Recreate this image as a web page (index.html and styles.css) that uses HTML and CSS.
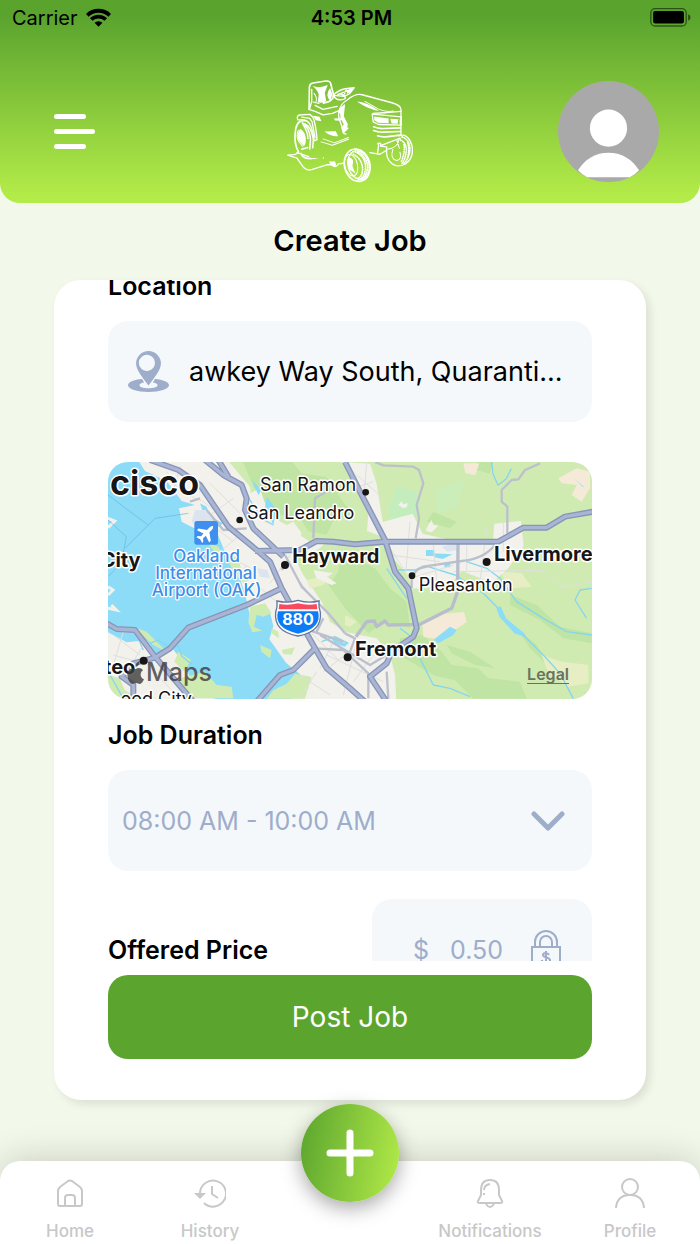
FILE: index.html
```html
<!DOCTYPE html>
<html lang="en">
<head>
<meta charset="utf-8">
<meta name="viewport" content="width=device-width, initial-scale=1">
<title>Create Job</title>
<link rel="stylesheet" href="styles.css">
</head>
<body>
<div class="app">
  <header class="header">
    <div class="status">
      <span class="carrier">Carrier
        <svg class="wifi" viewBox="0 0 76 56" aria-hidden="true"><path d="M38 56 26 44a17 17 0 0 1 24 0zM12 30a37 37 0 0 1 52 0l-8 8a26 26 0 0 0-36 0zM0 17a54 54 0 0 1 76 0l-8 9a43 43 0 0 0-60 0z"/></svg>
      </span>
      <time class="clock">4:53 PM</time>
      <svg class="battery" viewBox="0 0 124 58" aria-hidden="true"><rect x="2" y="2" width="108" height="53" rx="13" fill="none" stroke="#000" stroke-opacity=".5" stroke-width="4"/><rect x="9" y="9" width="94" height="38" rx="6"/><path d="M116 19q7 3 7 10t-7 10z" opacity=".55"/></svg>
    </div>
    <div class="bar">
      <button class="menu" type="button" aria-label="Menu"><span class="line short"></span><span class="line"></span><span class="line short"></span></button>
      <svg class="logo" viewBox="22 32 377 308" fill="none" stroke="#fff" stroke-width="5" stroke-linejoin="round" stroke-linecap="round" role="img" aria-label="Lawn mower">
        <path d="M88 120 89 53Q90 43 100 41l38-6q14-1 15 9l8 31-2 12-10 9-18 5"/>
        <path d="M96 60v36l-7 24M88 120l18 6 24 10 28-4 18-8M106 108l24 12 42-9" stroke-width="4"/>
        <path d="M98 50q22 8 46-3l-9 23 4 24-8 6-17-1 3-24q-5-15-19-25z" fill="#fff" stroke="none"/>
        <path d="M151 56q-16 20 0 38l7-18z" fill="#fff" stroke="none"/>
        <path d="M103 72q10 12 6 24M100 98l18 4" stroke-width="3"/>
        <path d="M161 76q18-15 35-18l27-3-14 18-16 8-32-3q7 14 20 13 14 0 16-6-3-10-18-12M174 76l38-15M199 62l-5 12" stroke-width="4"/>
        <path d="M202 63l19-7-12 15-8 3z" fill="#fff" stroke="none"/>
        <path d="M181 130q-5-24 22-39 24-20 44-15l89 24q26 7 27 20v78M180 116q-8 25 1 40l7 20 16 0-14 14 8 4" stroke-width="4"/>
        <path d="M180 116l16-12-4 36 12 24-3 17-13 8-4-16 8-8-10-18z" fill="#fff" stroke="none"/>
        <path d="M231 96q30 1 66 28-10 1-24-6-16-5-42-22z" fill="#fff" stroke="none"/>
        <path d="M255 96l41 23q24 10 44 6" stroke-width="3"/>
        <path d="M277 134l87 8v25l-68-2-16-8zM363 126l-50 4-34 2" stroke-width="4"/>
        <path d="M283 141l43 6v14l-31-1-12-8zM331 148l24 1-2 14-18-1zM359 149l5 1v13h-5z" fill="#fff" stroke="none"/>
        <path d="M281 172q15 6 30 5l50-2M281 183q15 6 30 5l50-2M293 199q10 4 25 3l42-5"/>
        <path d="M54 151q-6-15 13-15l24-1 9 8q8 20 12 67l-9 4q-4-36-14-52-8-12-27-11z" stroke-width="4"/>
        <path d="M66 143l24 4 7 10 9 48" stroke-width="4"/>
        <path d="M78 154q-24-5-30 24-7 42 8 68"/>
        <path d="M75 163q20 9 26 48l-2 24M68 160q24 18 24 54l-2 24M84 234l-18 5M70 166q14 18 15 44" stroke-width="5" stroke-dasharray="2 4"/>
        <path d="M62 178q20 13 16 42l-5 10-13-13q-14-19 2-39z" fill="#fff" stroke="none"/>
        <path d="M56 182q-8 16 1 34l12 15" stroke-width="3"/>
        <path d="M100 139l19 3 6 13-17-3zM134 186l34-1 7 15q-19 3-41-14zM162 147l26-1-6 8-16-1z" fill="#fff" stroke="none"/>
        <path d="M124 217l34 10 48-18M130 208l34 12 42-16" stroke-width="3"/>
        <path d="M56 247q-3 8-15 8l-17 2 28 9 20 28q12 12 31 4l40-13 13 1q11 12 20-3l16-2M52 249l35 12" stroke-width="4"/>
        <path d="M63 246q5 15 21 18l34 3-28 3q-30-1-27-24zM148 276h18l4 14q-18 4-22-14z" fill="#fff" stroke="none"/>
        <circle cx="131" cy="265" r="2" fill="#fff" stroke="none"/>
        <ellipse cx="232" cy="287" rx="38" ry="49" transform="rotate(-15 232 287)" stroke-dasharray="5 2"/>
        <ellipse cx="236" cy="286" rx="31" ry="43" transform="rotate(-15 236 286)" stroke-width="5" stroke-dasharray="2 5"/>
        <path d="M226 247q32 14 31 48-2 30-24 38M236 246q28 22 27 48-2 25-18 38M220 254q28 14 28 46 0 20-16 28" stroke-width="5" stroke-dasharray="2 5"/>
        <ellipse cx="214" cy="287" rx="19" ry="33" transform="rotate(-13 214 287)" stroke-width="3"/>
        <path d="M206 262q20 5 12 25l1 7 8 18-18-12-8-22z" fill="#fff" stroke="none"/>
        <path d="M270 249l30 5 20-12 0-10-18-2 0-8-8-1 2 8-3 21M302 228l59-22" stroke-width="4"/>
        <path d="M356 199q26-10 39 26 9 37-17 57-30 17-50-8-10-14-8-31" stroke-width="4"/>
        <path d="M366 202q23 8 24 37-3 30-19 43M361 211q18 8 18 32-2 26-15 41M372 225q4 22-8 51M383 220q8 24-3 52" stroke-width="5" stroke-dasharray="2 5"/>
        <path d="M357 209q-2 26-36 30M339 240q-10 27 11 33 17-4 10-25M350 210l8 26" stroke-width="3"/>
      </svg>
      <button class="avatar" type="button" aria-label="Account">
        <svg viewBox="0 0 304 304" aria-hidden="true"><circle cx="152" cy="152" r="152" fill="#a9a9a9"/><circle cx="152" cy="142" r="56" fill="#fff"/><path d="M60 269q34-53 92-53t92 53q-14 15-28 21H88q-14-6-28-21z" fill="#fff"/></svg>
      </button>
    </div>
  </header>

  <h1 class="title">Create Job</h1>

  <form class="card">
    <div class="scroller">
      <div class="fields">
        <label class="label" for="location">Location</label>
        <div class="field location">
          <svg class="pin" viewBox="0 0 122 122" fill="#9eadca" aria-hidden="true"><path fill-rule="evenodd" d="M61 0a37 37 0 0 1 37 37c0 20-21 43-37 66C45 80 24 57 24 37A37 37 0 0 1 61 0zm0 12a24 24 0 1 0 0 47 24 24 0 0 0 0-47z"/><path fill-rule="evenodd" d="M42 83C17 85 0 92 0 102c0 11 27 20 61 20s61-9 61-20c0-10-17-17-42-19l-6 11c8 1 14 4 14 8 0 5-12 9-27 9s-27-4-27-9c0-4 6-7 14-8z"/></svg>
          <input class="input" id="location" type="text" value="awkey Way South, Quaranti...">
        </div>

        <div class="map">
          <svg class="map-art" viewBox="24 21 1452 711" preserveAspectRatio="xMidYMid slice" role="img" aria-label="Map of the San Francisco Bay Area">
            <path fill="#f2f1ec" d="M0 0h1500v760H0z"/>
            <path fill="#d0ebb1" d="M370 0 420 60 450 95 455 150 500 205 560 215 630 260 680 262 640 295 575 290 610 360 665 440 690 500 735 530 780 540 830 550 870 600 885 660 890 760H1500V0z"/>
            <path fill="#bfe4a4" d="M420 0h140l45 55 75 12 50 75 30 35-60 20-20 42-55-10-25-40-70-12-60-60-30-70zM720 285l105 55 45 60 50 40 10 80-75-20-50 35-70-75-50-70 30-40zM900 550l70-10 55 50 30 40 80 10 30 30 95 10 20 51H1120l-55-55-60-14-105-60zM1040 570l70 20 75 50-60-10-70-35zM1250 520l60 50 40 70-60-60zM1230 420l80 30 70 65 95 20v30l-85-15-70-55-90-45zM1130 21l50 0-10 35-40-10zM1000 170l70 30-20 20-70-20z"/>
            <path fill="#c3edbd" d="M870 150l20-55 60 15 10 60-45 45-45-15z"/>
            <path fill="#cbedb9" d="M1005 105l90-30-20 80-60 20z"/>
            <path fill="#e7eec4" d="M1200 350l65 5 30 40-65 5zM735 480l35 20-20 15-15-5zM1325 600l60 20 80 10v55l-60 10-60-40zM620 375l70-15-20 30-40 10z"/>
            <path fill="#f2f1ec" d="M725 21l85 5 20 60 10 65 8 50 90-25 30 60 65 15 145 20 5-65 80-8 8 75-45 65-50 45-90-35-40 45-110 8-15-45-45-50-25-60-50-18 4-50-40-85zM985 210l10-15 5 15 15 2-20 20-18-5zM895 150l10-12 4 10 14-4-2 12-12 4zM640 345l60 10-20 10 30 20-15 5-45-20z"/>
            <path fill="#f2f1ec" d="M480 165l80 45 20-10 25 35-15 30-65-15zM440 120l40-20 20 60-30 10z"/>
            <path fill="#f5ead8" d="M967 506l65-30 60-5 8 30-30 20-65 30-35-5zM1090 25h48l-12 35-30-5zM1375 70l55-30 40 10v50l-25 40-30-20 15-30-45-5z"/>
            <path fill="#8cdcf8" d="M0 0H105l30 48 65 30 45 60 40 12-48 10 8 40 38 20 70 18 25 60 40 65 20 65 12 55 60-10 10 40-12 40 50 70 42 35 10 40-50 50-60 31H425l-15-30-72-20-20-35-48-20-10-40-40-50-50 12-30-40-60 6-56-30z"/>
            <path fill="#8cdcf8" d="M300 145l20 10 10 30 40 20-15 10-40-25zM500 125l30 40-10 45-25-50zM455 75l30 30-10 15zM978 285h25v18h-25zM998 295l60 3-30 14-25-5zM1033 325h18v12h-18zM1000 555l50-40 20 10-10 15-45 25zM1188 455l15 0 15 35 55 45 5 12-35-12-45-50zM1425 72l28 25-5-2zM690 545l30 15 25 5-10 10-30-8z"/>
            <path fill="none" stroke="#f2f1ec" stroke-width="9" d="M24 460l25 5-15-15M24 190l20 8-20 20M24 395l15 10-15 15"/>
            <path fill="#d0ebb1" d="M450 455l45-10 20 30-25 10-20-5-8 35 25 12-30 5-12-30zM480 570l35 15-5 25-25-20zM545 585l40-8-10 22-25-2zM515 520l20 10 2 20-22-15zM100 515l40 15 60 60-40-20zM235 590l38 25-20 35-30-30zM240 670l75-20 35 40 45 5 5 35H270l-30-30zM24 660l35 10 15 35 40 27H24zM500 731l20-25 40-20 25-30 50 10-20 65zM385 320l25-20 15 45 25 25-15 20-28-30zM320 260l35 15 20 35-20-5z"/>
            <path fill="#dce5ef" d="M285 165l35 0 25 40-20 30-50-35zM472 340l30 5 8 25-30-5zM1025 275l40-10 8 20-30 5z"/>
            <g fill="none" stroke="#86d5ef" stroke-width="4" stroke-linejoin="round">
              <path d="M1175 21l4 35 15 35 25-20 15-30M895 345l50 0 40-10 80 25 85 55 40 40M1100 320l60 20 40 30 50 70 80 50 70 40 75 10M1475 400l-35 5-15 30 35 55M1270 540l60 60 50 55 40 76M960 610l40 80 50 10 60 25M440 120l45 70 35 20M150 565l25-10 30 20 30-2 10 30 30 25M110 540l20 45M30 660l40 71M860 340l60 90M665 560l40-15 40 20M900 520l40 30-15 20"/>
            </g>
            <g fill="none" stroke="#67b5d9" stroke-width="2"><path d="M265 175l-100 15-90 90M24 195l55 50-15 80-40 40M24 120l120 90"/></g>
            <g fill="none" stroke="#dedfdf" stroke-width="3">
              <path d="M200 50l40 60 70 30 50 40M240 35l-20 70M330 85l90 90M310 190l90 70M400 130l-70 50M420 240l-60 50M380 300l90 50M440 330l-35 45M470 390l60 50M560 460l50 90M570 300l-60 85M600 380l60 80M620 520l100 100M700 560l-40 80M680 600l170 80M735 600l-65 50M770 560l-40 160M820 600l-60 80M860 590l-90-20M600 660l90 60M650 650l-50 80M40 540l80 60M40 600l110 30M70 530l-30 100M130 570l-60 100M160 650l60 60M770 60l80 70M760 100l60-20M800 21l-10 130M850 250l60 90M930 200l-15 180M870 300l150 20M1000 270l10 110M1160 220l-20 160M1060 350l260-4 70 50 85-15M1210 200v90M1100 270v80M900 380l160-50"/>
            </g>
            <g fill="none" stroke="#bcc0cc" stroke-width="7" stroke-linejoin="round">
              <path d="M825 21 850 31 940 35 957 45 970 85 950 150 957 190 947 250M1320 25l-45 20-20 28-20 2-30 30v35l17 15v80M935 400v-25q5-30 35-40l115-17q65-5 100-48M270 140l30-10M440 220l-70 5-50-60M640 250l5-120 70-40M555 300l50 95 80 80 50 60M590 500l50 30 90 30M545 345l10-15M735 535l30 15-15 40M650 530l20-40M640 580l90 5 75 70v75M660 540l150 90 50-30M860 650l5 81"/>
              <path stroke-width="10" stroke="#b8bdcb" d="M1074 265l-1 145-18 50-95 48-95 2-10-12-25 17-7-17-23 2-32 45"/>
            </g>
            <g fill="none" stroke="#8995b7" stroke-width="18" stroke-linejoin="round">
              <path d="M150 15 235 45 300 90 385 215 470 285 510 320 545 400 600 500 645 580 680 640 750 700 795 740M315 15 370 60 425 90 440 130 435 165 460 220 550 305M355 15 385 65M465 288 600 285 650 258 700 260 765 268 855 260H1195L1270 218H1340L1395 185 1480 170M735 21 780 110 855 255 885 350 925 400 950 520 940 545 875 590 860 625 810 665 860 740M165 608 210 580 265 518 440 450 545 400M20 505 50 522 105 525 165 605 280 740M165 608 100 625 65 665 100 690V740M470 740 540 660 580 645 645 580"/>
              <path d="M150 15 235 45 300 90 385 215 470 285 510 320 545 400 600 500 645 580 680 640 750 700 795 740M315 15 370 60 425 90 440 130 435 165 460 220 550 305M355 15 385 65M465 288 600 285 650 258 700 260 765 268 855 260H1195L1270 218H1340L1395 185 1480 170M735 21 780 110 855 255 885 350 925 400 950 520 940 545 875 590 860 625 810 665 860 740M165 608 210 580 265 518 440 450 545 400M20 505 50 522 105 525 165 605 280 740M165 608 100 625 65 665 100 690V740M470 740 540 660 580 645 645 580" stroke="#a9b5d4" stroke-width="10"/>
            </g>
            <g fill="#161616"><circle cx="419" cy="195" r="10"/><circle cx="555" cy="330" r="12"/><circle cx="797" cy="112" r="10"/><circle cx="936" cy="362" r="10"/><circle cx="1160" cy="321" r="12"/><circle cx="743" cy="607" r="12"/><circle cx="131" cy="617" r="12"/></g>
            <rect x="283" y="198" width="71" height="71" rx="8" fill="#3e8fee"/>
            <path fill="#fff" transform="translate(319 234) rotate(45)" d="M0-29q5 3 5 12v9l21 15v7L5 7 4 18l8 7v5L0 26l-12 4v-5l8-7L-5 7-26 14V7L-5-8v-9q0-9 5-12z"/>
            <path d="M531 438q32 8 63-2 31 10 63 2-2 17 4 34 6 58-67 71-73-13-67-71 6-17 4-34z" fill="#fff" stroke="#61779f" stroke-width="4"/>
            <path d="M538 447q28 5 56-2 28 7 56 2l2 16H536z" fill="#f84a5c"/>
            <path d="M534 469h120q14 51-60 67-74-16-60-67z" fill="#0b7cf5"/>
            <text class="shield" x="594" y="509">880</text>
            <g class="place">
              <text x="480" y="108">San Ramon</text><text x="441" y="192">San Leandro</text><text x="956" y="407">Pleasanton</text>
            </g>
            <g class="place major">
              <text x="577" y="324">Hayward</text><text x="1182" y="318">Livermore</text><text x="765" y="602">Fremont</text>
              <text class="end" x="122" y="335">City</text><text class="end" x="106" y="656">teo</text>
            </g>
            <text class="place city" x="30" y="120">cisco</text>
            <text class="place end" x="276" y="750">ood City</text>
            <g class="airport"><text x="320" y="320">Oakland</text><text x="318" y="372">International</text><text x="320" y="424">Airport (OAK)</text></g>
            <path fill="#3c3c3c" opacity=".8" d="M107 636q-2-13 12-19 1 14-12 19zM107 642c7-4 16-5 22 4-12 8-7 24 3 27-3 8-8 14-12 14-5 0-7-3-12-3s-7 3-12 3c-9-2-18-26-12-38 5-10 15-9 23-7z"/>
            <text class="brand" x="138" y="678">Maps</text>
          </svg>
          <a class="legal" href="#legal">Legal</a>
        </div>

        <label class="label" for="duration">Job Duration</label>
        <div class="field duration">
          <select class="input muted" id="duration"><option>08:00 AM - 10:00 AM</option></select>
          <svg class="chevron" viewBox="0 0 34 22" fill="none" stroke="#9eadca" stroke-width="5" stroke-linecap="round" stroke-linejoin="round" aria-hidden="true"><path d="M3 4l14 14L31 4"/></svg>
        </div>

        <div class="price-row">
          <label class="label" for="price">Offered Price</label>
          <div class="field price">
            <span class="currency">$</span>
            <input class="input muted" id="price" type="text" value="0.50">
            <svg class="lock" viewBox="0 0 30 40" fill="none" stroke="#9eadca" stroke-width="2" aria-hidden="true"><path d="M1 17h28v22H1zM4 17v-5a11 11 0 0 1 22 0v5M9 17v-5a6 6 0 0 1 12 0v5M15 21v14M18 25q-1-2-3-2-3 0-3 2c0 3 7 2 7 5 0 2-2 3-4 3s-4-1-4-3"/></svg>
          </div>
        </div>
      </div>
    </div>
    <button class="submit" type="button">Post Job</button>
  </form>

  <nav class="tabs">
    <a class="tab" href="#home"><svg viewBox="0 0 30 30" aria-hidden="true"><path d="M5 9 13 3q2-1 4 0l8 6q2 2 2 4v13q0 2-2 2H5q-2 0-2-2V13q0-2 2-4zM10 28V20q0-3 3-3h4q3 0 3 3v8"/></svg>Home</a>
    <a class="tab" href="#history"><svg class="wide" viewBox="0 0 32 30" aria-hidden="true"><path d="M6 15A13 13 0 1 1 10 25M18 8v8l6 4"/><path class="solid" d="M0 15h12l-6 6z"/></svg>History</a>
    <div class="tab-gap">
      <button class="add" type="button" aria-label="Add job"><svg viewBox="0 0 48 48" fill="none" stroke="#fff" stroke-width="7" stroke-linecap="round" aria-hidden="true"><path d="M24 4v40M4 24h40"/></svg></button>
    </div>
    <a class="tab" href="#notifications"><svg class="thin" viewBox="0 0 30 30" aria-hidden="true"><path d="M5 25q-3 0-2-2l3-6v-5q0-10 9-10t9 10v5l3 6q1 2-2 2zM11 26q4 6 8 0M9 12q0-5 6-6M9 15v2"/></svg>Notifications</a>
    <a class="tab" href="#profile"><svg viewBox="0 0 30 30" aria-hidden="true"><circle cx="15" cy="9" r="8"/><path d="M1 30q1-13 14-13t14 13"/></svg>Profile</a>
  </nav>
</div>
</body>
</html>
```

FILE: styles.css
```css
* { box-sizing: border-box; }
body { margin: 0; font-family: Inter, "Liberation Sans", sans-serif; color: #000; background: #f3f9ea; }
button, input, select { font: inherit; color: inherit; border: 0; padding: 0; margin: 0; background: none; }
button { cursor: pointer; }
a { color: inherit; }
svg { display: block; }

.app { height: 100vh; min-height: 900px; display: flex; flex-direction: column; overflow: hidden; }

.header { flex: none; padding-bottom: 20px; border-radius: 0 0 20px 20px; background: linear-gradient(#5aa42e 8%, #b3eb48 96%); }
.status { display: grid; grid-template-columns: 1fr auto 1fr; align-items: center; height: 35px; padding: 0 9px 0 12px; font-size: 20px; }
.carrier { display: flex; align-items: center; gap: 8px; }
.wifi { width: 25px; height: 19px; }
.clock { font-weight: 600; }
.battery { width: 41px; height: 19px; justify-self: end; }
.bar { display: grid; grid-template-columns: 1fr auto 1fr; align-items: center; padding: 45px 41px 0; }
.menu { width: 41px; margin-left: 13px; display: flex; flex-direction: column; gap: 10px; }
.line { width: 100%; height: 5px; border-radius: 3px; background: #fff; }
.line.short { width: 32px; }
.logo { width: 126px; height: 103px; }
.avatar { justify-self: end; width: 101px; height: 101px; border-radius: 50%; }

.title { flex: none; margin: 0; padding: 18px 0 19px; line-height: 40px; font-size: 29px; font-weight: 600; text-align: center; }

.card { flex: 1; min-height: 0; margin: 0 54px 61px; padding: 0 54px 41px; display: flex; flex-direction: column; gap: 14px; border-radius: 27px; background: #fff; box-shadow: 4px 4px 8px rgba(0, 0, 0, .1); }
.scroller { flex: 1; min-height: 0; overflow: hidden; }
.fields { margin-top: -9px; }
.label { display: block; line-height: 30px; font-size: 25px; font-weight: 600; }
.field { display: flex; align-items: center; height: 101px; margin-top: 20px; border-radius: 20px; background: #f4f8fb; }
.input { flex: 1; min-width: 0; height: 100%; appearance: none; outline: 0; text-overflow: ellipsis; }
.muted { color: #9eadca; font-size: 25px; }
.location { padding: 0 20px; gap: 20px; font-size: 27px; }
.pin { width: 41px; height: 41px; }
.duration { padding: 0 27px 0 14px; }
.chevron { width: 34px; height: 22px; }

.map { position: relative; height: 237px; margin: 40px 0 21px; border-radius: 20px; overflow: hidden; }
.map-art { width: 100%; height: 100%; }
.place { font-size: 54px; fill: #161616; stroke: #fff; stroke-width: 9px; stroke-linejoin: round; paint-order: stroke; }
.major { font-size: 60px; font-weight: 700; }
.city { font-size: 102px; font-weight: 700; }
.end { text-anchor: end; }
.airport { font-size: 51px; font-weight: 500; text-anchor: middle; fill: #3e8de8; stroke: #fff; stroke-width: 7px; stroke-linejoin: round; paint-order: stroke; }
.shield { font-size: 48px; font-weight: 700; text-anchor: middle; fill: #fff; }
.brand { font-size: 75px; font-weight: 500; fill: #3c3c3c; opacity: .8; }
.legal { position: absolute; right: 23px; bottom: 16px; line-height: 18px; font-size: 16px; font-weight: 600; color: #6b7360; text-underline-offset: 3px; }

.price-row { display: flex; align-items: center; justify-content: space-between; margin-top: 28px; }
.price { width: 220px; margin: 0; padding: 0 31px 0 41px; }
.currency { width: 37px; color: #9eadca; font-size: 25px; }
.lock { width: 30px; height: 40px; }

.submit { flex: none; height: 84px; border-radius: 20px; background: #5ba52f; color: #fff; font-size: 28px; }

.tabs { flex: none; display: grid; grid-template-columns: repeat(5, 1fr); height: 83px; border-radius: 20px 20px 0 0; background: #fff; box-shadow: 0 0 36px rgba(0, 0, 0, .2); }
.tab { display: flex; flex-direction: column; align-items: center; gap: 13px; padding-top: 17px; line-height: 20px; font-size: 17px; font-weight: 500; color: #c8c8c8; text-decoration: none; }
.tab svg { width: 30px; height: 30px; fill: none; stroke: currentColor; stroke-width: 2; }
.tab .wide { width: 32px; }
.tab .thin { stroke-width: 2; }
.tab .solid { fill: currentColor; stroke: none; }
.tab-gap { display: flex; justify-content: center; }
.add { flex: none; width: 98px; height: 98px; margin-top: -57px; display: grid; place-items: center; border-radius: 50%; background: linear-gradient(100deg, #5aa42e, #b3eb48); box-shadow: 0 6px 20px rgba(0, 0, 0, .35); }
.add svg { width: 48px; height: 48px; }
```
